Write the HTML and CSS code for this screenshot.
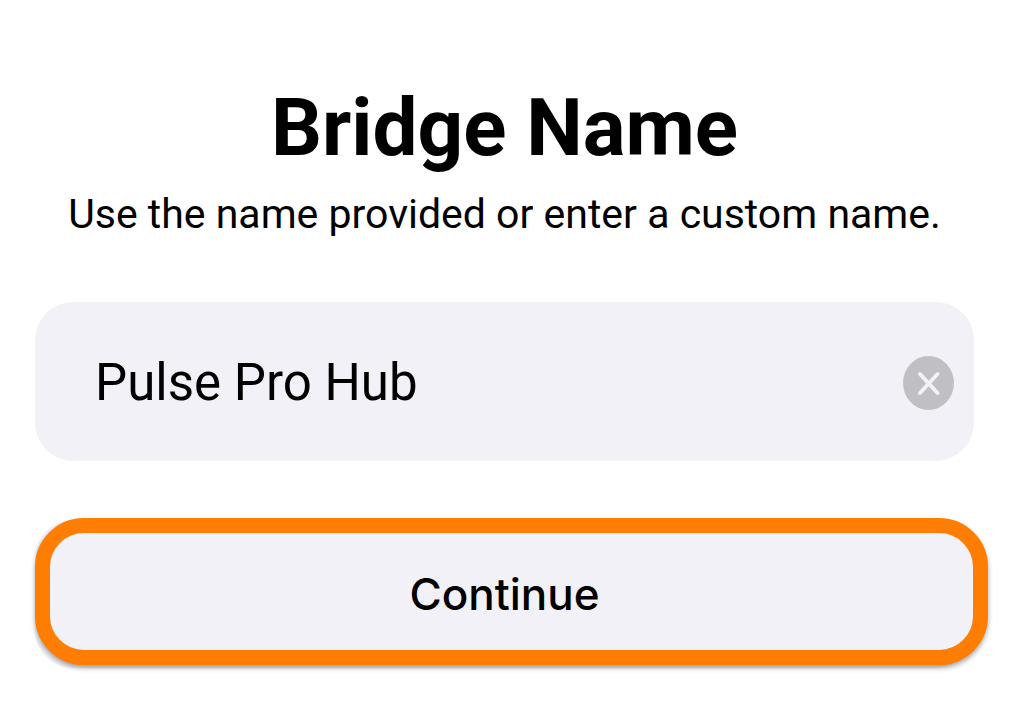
FILE: index.html
```html
<!DOCTYPE html>
<html lang="en">
<head>
<meta charset="utf-8">
<meta name="viewport" content="width=device-width, initial-scale=1">
<title>Bridge Name</title>
<link rel="stylesheet" href="styles.css">
</head>
<body>
<main class="page">
  <header class="intro">
    <h1 class="title">Bridge Name</h1>
    <p class="subtitle" id="hint">Use the name provided or enter a custom name.</p>
  </header>
  <form class="form">
    <div class="field">
      <input class="field-input" type="text" value="Pulse Pro Hub" aria-label="Bridge name" aria-describedby="hint">
      <button class="clear" type="button" aria-label="Clear text">
        <svg class="clear-icon" viewBox="0 0 52 54" aria-hidden="true">
          <ellipse cx="26.500" cy="27" rx="25.500" ry="27" fill="#bfbfc4"/>
          <path d="M18 18 35.500 37M35.500 18 18 37" stroke="#f2f1f7" stroke-width="4" stroke-linecap="round"/>
        </svg>
      </button>
    </div>
    <div class="action">
      <button class="continue" type="button">Continue</button>
    </div>
  </form>
</main>
</body>
</html>
```
FILE: styles.css
```css
* {
  box-sizing: border-box;
}

body {
  margin: 0;
  background: #fff;
  color: #000;
  font-family: Roboto, "Liberation Sans", sans-serif;
}

.page {
  padding: 80px 36px 48px 35px;
}

.intro {
  padding-right: 14px;
  text-align: center;
}

.title {
  margin: 0;
  font-size: 80px;
  line-height: 96px;
  font-weight: 700;
}

.subtitle {
  margin: 12px 0 0;
  font-size: 41px;
  line-height: 52px;
  white-space: nowrap;
}

.form {
  display: flex;
  flex-direction: column;
  gap: 57px;
  margin-top: 62px;
}

.field {
  display: flex;
  align-items: center;
  margin-right: 14px;
  padding: 49px 20px 46px 60px;
  border-radius: 38px;
  background: #f2f1f7;
}

.field-input {
  flex: 1;
  min-width: 0;
  height: 64px;
  padding: 0;
  border: 0;
  outline: 0;
  background: none;
  color: inherit;
  font: 400 51px/64px Roboto, "Liberation Sans", sans-serif;
}

.clear {
  display: flex;
  padding: 0;
  border: 0;
  background: none;
}

.clear-icon {
  width: 52px;
  height: 54px;
}

.action {
  position: relative;
  display: flex;
}

/* Pale plate that shows past the rounded corners of the outline */
.action::before {
  content: "";
  position: absolute;
  inset: 2px 14px -3px 0;
  border-radius: 38px;
  background: #f2f1f7;
}

.continue {
  position: relative;
  flex: 1;
  padding: 33px 14px 28px 0;
  border: 15px solid #ff7d00;
  border-radius: 49px;
  background: #f2f1f7;
  box-shadow: 0 3px 5px rgb(0 0 0 / 35%);
  color: inherit;
  font: 500 44px/56px Inter, "Liberation Sans", sans-serif;
}
```
